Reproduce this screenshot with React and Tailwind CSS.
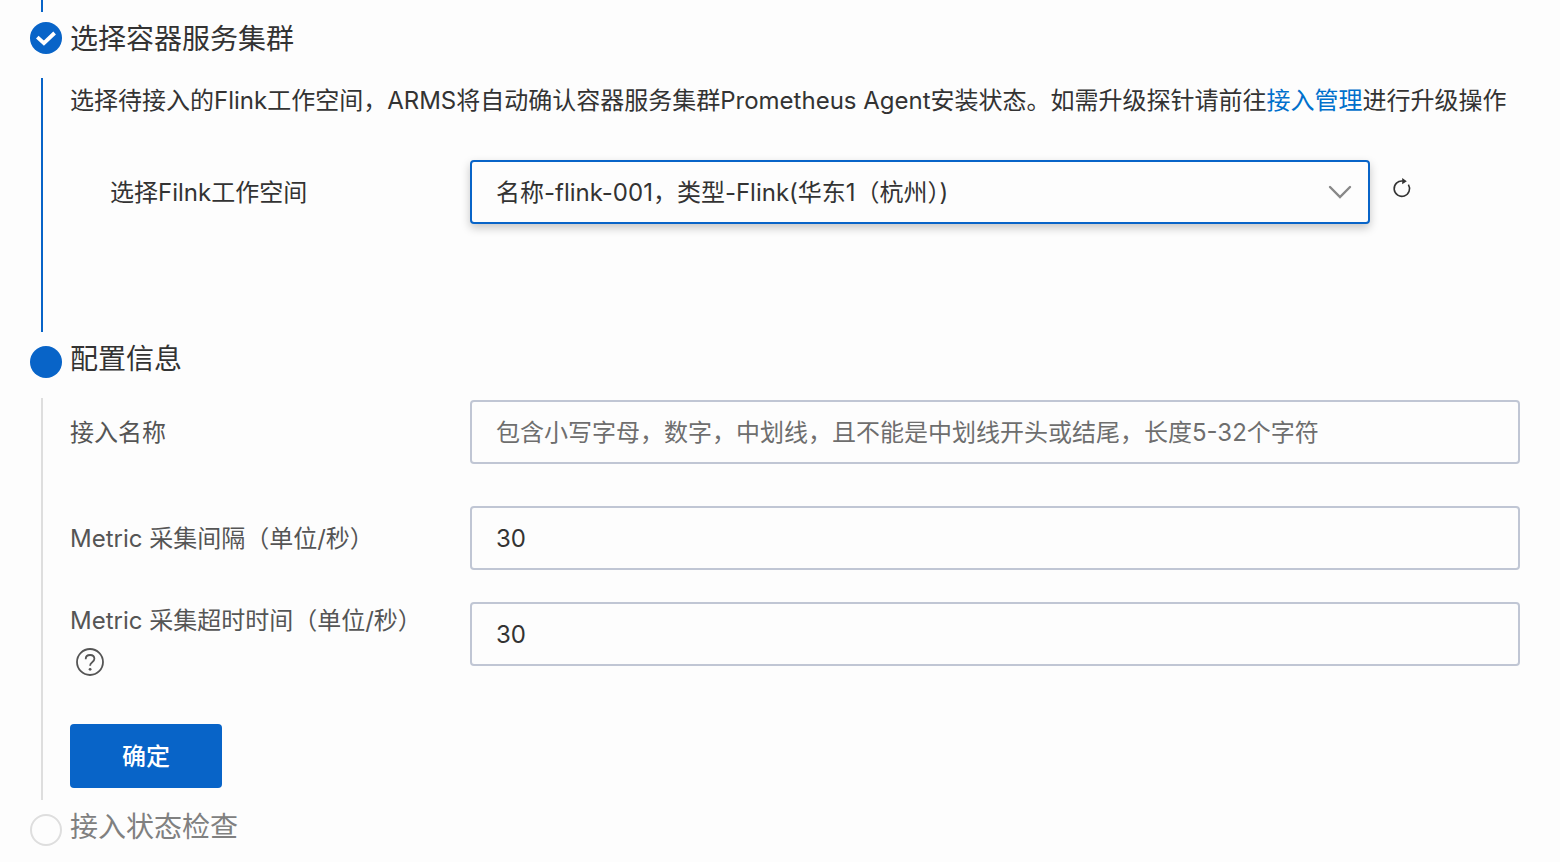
const dotStyles = {
  done: 'mt-2.5 bg-[#0864c8]',
  active: 'mt-3.5 bg-[#0864c8]',
  waiting: 'mt-3.5 border-2 border-[#dedede]',
};

const titleStyles = {
  done: 'text-[#333333]',
  active: 'text-[#333333]',
  waiting: 'text-[#808080]',
};

const inputClass =
  'h-16 min-w-0 flex-1 rounded-[4px] border-2 border-[#c0c6d4] bg-transparent px-6 text-2xl text-[#333333] placeholder:text-[#6e6e6e] placeholder:opacity-100 outline-none focus:border-[#0864c8]';

const CheckIcon = () => (
  <svg className="h-8 w-8" viewBox="0 0 32 32" fill="none" stroke="#fff" strokeWidth="3.8">
    <path d="M7.3 15.2l6.6 6L24.6 11" />
  </svg>
);

const ChevronIcon = () => (
  <svg className="pointer-events-none absolute right-[18px] top-5 h-6 w-6" viewBox="0 0 24 24" fill="none" stroke="#888" strokeWidth="2.4" strokeLinecap="round" strokeLinejoin="miter">
    <path d="M2 7l10 10L22 7" />
  </svg>
);

const RefreshIcon = () => (
  <svg className="h-6 w-6" viewBox="0 0 24 24" fill="none" stroke="#333" strokeWidth="1.6">
    <path d="M18.4 8.6A7.7 7.7 0 1 1 12.8 5" />
    <path d="M12.2 2l4.6 3.2-4.6 3z" fill="#333" stroke="none" />
  </svg>
);

const HelpIcon = () => (
  <svg className="h-7 w-7" viewBox="0 0 28 28" fill="none" stroke="#555" strokeWidth="1.8">
    <circle cx="14" cy="14" r="13" />
    <path d="M9.7 11.2c0-2.6 1.8-4.2 4.4-4.2s4.3 1.6 4.3 3.8c0 1.6-.8 2.4-2.2 3.4-1.5 1.1-2.1 1.8-2.1 3.6" />
    <circle cx="14.1" cy="21.3" r="1.4" fill="#555" stroke="none" />
  </svg>
);

const Step = ({ title, status, children }) => (
  <li>
    <div className="flex gap-2">
      <span className={`flex h-8 w-8 shrink-0 items-center justify-center rounded-full ${dotStyles[status]}`}>
        {status === 'done' && <CheckIcon />}
      </span>
      <h2 className={`text-[28px] leading-[54px] ${titleStyles[status]}`}>{title}</h2>
    </div>
    {children && (
      <div className={`ml-[11px] mt-3 border-l-2 pl-[27px] ${status === 'done' ? 'border-[#0864c8]' : 'border-[#dedede]'}`}>
        {children}
      </div>
    )}
  </li>
);

export default function App() {
  return (
    <main className="min-h-screen overflow-hidden bg-[#fdfdfd] pl-[30px] pr-10 font-['Inter','Noto_Sans_CJK_SC',sans-serif] text-2xl">
      {/* tail of the previous step */}
      <div className="ml-[11px] h-3 w-0.5 bg-[#0864c8]" />

      <ol>
        <Step title="选择容器服务集群" status="done">
          <p className="leading-[46px] text-[#333333]">
            选择待接入的Flink工作空间，ARMS将自动确认容器服务集群Prometheus Agent安装状态。如需升级探针请前往
            <a href="#" className="text-[#0070cc]">接入管理</a>
            进行升级操作
          </p>
          <div className="mt-9 flex pb-[106px] pl-10">
            <label htmlFor="workspace" className="w-[360px] shrink-0 leading-[66px] text-[#333333]">
              选择Filnk工作空间
            </label>
            <div className="relative min-w-0 flex-1">
              <select
                id="workspace"
                className="h-16 w-full appearance-none rounded-[4px] border-2 border-[#0864c8] bg-[#fdfdfd] px-6 pt-0.5 text-2xl text-[#333333] shadow-[0_4px_10px_rgba(0,0,0,0.22)] outline-none"
              >
                <option>名称-flink-001，类型-Flink(华东1（杭州）)</option>
              </select>
              <ChevronIcon />
            </div>
            <button type="button" aria-label="刷新" className="ml-5 mr-[106px] mt-4 h-6 w-6">
              <RefreshIcon />
            </button>
          </div>
        </Step>

        <Step title="配置信息" status="active">
          <form className="pb-3 pt-0.5 text-[#555555]" onSubmit={(e) => e.preventDefault()}>
            <div className="flex">
              <label htmlFor="name" className="w-[400px] shrink-0 leading-[66px]">接入名称</label>
              <input
                id="name"
                className={inputClass}
                placeholder="包含小写字母，数字，中划线，且不能是中划线开头或结尾，长度5-32个字符"
              />
            </div>
            <div className="mt-10 flex">
              <label htmlFor="interval" className="w-[400px] shrink-0 leading-[66px]">Metric 采集间隔（单位/秒）</label>
              <input id="interval" className={inputClass} defaultValue="30" />
            </div>
            <div className="mt-[30px] flex">
              <div className="w-[400px] shrink-0">
                <label htmlFor="timeout" className="block leading-[38px]">Metric 采集超时时间（单位/秒）</label>
                <button type="button" aria-label="帮助" className="ml-1.5 mt-2 block h-7 w-7">
                  <HelpIcon />
                </button>
              </div>
              <input id="timeout" className={inputClass} defaultValue="30" />
            </div>
            <button type="submit" className="mt-12 h-16 w-[152px] rounded-[4px] bg-[#0864c8] pt-0.5 font-medium text-white">
              确定
            </button>
          </form>
        </Step>

        <Step title="接入状态检查" status="waiting" />
      </ol>
    </main>
  );
}
